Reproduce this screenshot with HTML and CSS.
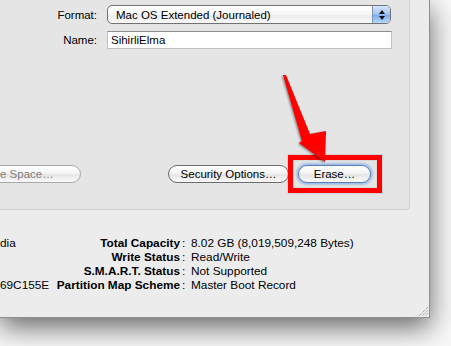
FILE: index.html
```html
<!DOCTYPE html>
<html>
<head>
<meta charset="utf-8">
<link rel="stylesheet" href="styles.css">
</head>
<body>
<div class="window">
  <div class="panel">
    <div class="form">
      <div class="label">Format:</div>
      <div class="popup">
        <span class="popup-text">Mac OS Extended (Journaled)</span>
        <span class="popup-arrows">
          <svg width="8" height="12" viewBox="0 0 8 12"><path d="M4 1 L7 5 L1 5 Z M4 11 L7 7 L1 7 Z" fill="#111"/></svg>
        </span>
      </div>
      <div class="label">Name:</div>
      <div class="field">SihirliElma</div>
    </div>
    <div class="btnrow">
      <div class="btn btn-space">e Space…</div>
      <div class="btn btn-sec">Security Options…</div>
      <div class="btn btn-erase">Erase…</div>
    </div>
  </div>
  <div class="info">
    <div class="lcol">dia</div><div class="key">Total Capacity</div><div class="sep">:</div><div class="val">8.02 GB (8,019,509,248 Bytes)</div>
    <div class="lcol"></div><div class="key">Write Status</div><div class="sep">:</div><div class="val">Read/Write</div>
    <div class="lcol"></div><div class="key">S.M.A.R.T. Status</div><div class="sep">:</div><div class="val">Not Supported</div>
    <div class="lcol">69C155E</div><div class="key">Partition Map Scheme</div><div class="sep">:</div><div class="val">Master Boot Record</div>
  </div>
  <svg class="grip" width="12" height="12" viewBox="0 0 12 12">
    <path d="M11 2 L2 11 M11 5 L5 11 M11 8 L8 11" stroke="#8a8a8a" stroke-width="1" stroke-dasharray="1 1"/>
  </svg>
</div>
<div class="redbox"></div>
<svg class="arrow" width="451" height="346" viewBox="0 0 451 346">
  <polygon points="283,75 286,75 310,134 326,131 325,162 299,143 302,141" fill="#ff0000"/>
</svg>
</body>
</html>
```

FILE: styles.css
```css
html, body {
  margin: 0;
  padding: 0;
}
body {
  width: 451px;
  height: 346px;
  overflow: hidden;
  background: #f8f8f8;
  font-family: "Liberation Sans", Arial, sans-serif;
  color: #000;
  position: relative;
}
.window {
  position: relative;
  width: 429px;
  height: 317px;
  background: #ececec;
  border-right: 1px solid #8e8e8e;
  border-bottom: 1px solid #8e8e8e;
  box-shadow: 0 9px 26px rgba(0, 0, 0, 0.6);
}
.panel {
  box-sizing: border-box;
  width: 410px;
  height: 210px;
  background: #e5e5e5;
  border-right: 1px solid #d0d0d0;
  border-bottom: 1px solid #d0d0d0;
  border-bottom-right-radius: 4px;
  padding-top: 5px;
  overflow: hidden;
}
.form {
  display: grid;
  grid-template-columns: 97px 285px;
  grid-template-rows: 19px 18px;
  column-gap: 10px;
  row-gap: 7px;
  font-size: 11.5px;
}
.label {
  text-align: right;
  align-self: center;
  line-height: 14px;
}
.popup {
  box-sizing: border-box;
  width: 284px;
  height: 19px;
  border: 1px solid #727272;
  border-radius: 5px;
  background: linear-gradient(#ffffff, #f6f6f6 50%, #ebebeb 51%, #f8f8f8);
  display: flex;
  align-items: center;
  overflow: hidden;
}
.popup-text {
  flex: 1;
  padding-left: 8px;
  line-height: 14px;
}
.popup-arrows {
  width: 17px;
  height: 100%;
  border-left: 1px solid #7f93b5;
  background: linear-gradient(#d6e5fa, #a8c8f2 45%, #7eaeee 55%, #b8d6fb);
  display: flex;
  align-items: center;
  justify-content: center;
}
.popup-arrows svg {
  display: block;
}
.field {
  box-sizing: border-box;
  height: 18px;
  background: #fff;
  border: 1px solid #c2c2c2;
  border-top-color: #8e8e8e;
  padding-left: 3px;
  line-height: 16px;
}
.btnrow {
  display: flex;
  align-items: center;
  gap: 9px;
  margin-top: 116px;
  padding-right: 38px;
  height: 18px;
  font-size: 11.5px;
}
.btn {
  box-sizing: border-box;
  height: 18px;
  border-radius: 9px;
  border: 1px solid #6c6c6c;
  background: linear-gradient(#ffffff, #f4f4f4 45%, #e6e6e6 55%, #fafafa);
  text-align: center;
  line-height: 16px;
  white-space: nowrap;
}
.btn-space {
  width: 121px;
  margin-left: -40px;
  margin-right: auto;
  color: #7c7c7c;
  border-color: #a9a9a9;
  padding-left: 39px;
  text-align: left;
}
.btn-sec {
  width: 121px;
}
.btn-erase {
  width: 73px;
  border-color: #5a7fb8;
  box-shadow: 0 0 0 1px #9fc0ec, 0 0 2px 2px rgba(120, 165, 225, 0.55);
}
.info {
  display: grid;
  grid-template-columns: 52px 128px 11px 1fr;
  margin-top: 26px;
  font-size: 11.8px;
  line-height: 14px;
}
.key {
  font-weight: bold;
  text-align: right;
  white-space: nowrap;
}
.sep {
  padding-left: 2px;
}
.val, .lcol {
  white-space: nowrap;
}
.grip {
  position: absolute;
  right: 0;
  bottom: 0;
}
.redbox {
  position: absolute;
  left: 288px;
  top: 155px;
  width: 84px;
  height: 28px;
  border: 5px solid #ff0000;
  box-shadow: 0 0 1px rgba(0, 0, 0, 0.5), inset 0 0 1px rgba(0, 0, 0, 0.5);
}
.arrow {
  position: absolute;
  left: 0;
  top: 0;
  pointer-events: none;
  filter: drop-shadow(-1px 1px 1px rgba(0, 0, 0, 0.45));
}
```
